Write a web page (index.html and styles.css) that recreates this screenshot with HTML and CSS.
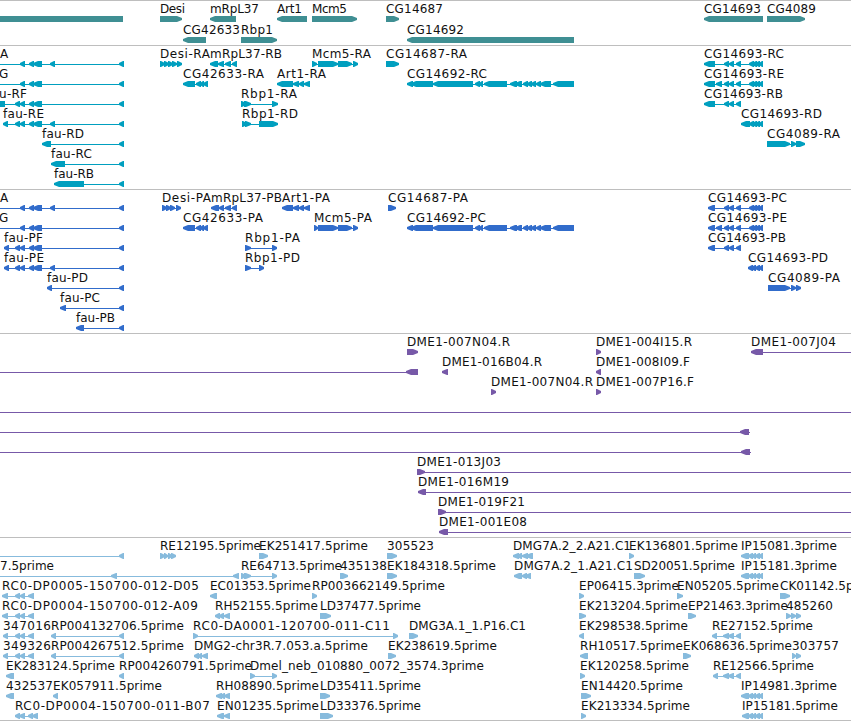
FILE: index.html
```html
<!DOCTYPE html>
<html lang="en">
<head>
  <meta charset="UTF-8">
  <title>Genome tracks</title>
  <link rel="stylesheet" href="styles.css">
</head>
<body>

<main id="browser" class="browser"></main>

<script src="tracks.js"></script>

</body>
</html>
```

FILE: styles.css
```css
body {
  margin: 0;
  background-color: #fff;
  font-family: "DejaVu Sans", sans-serif;
  font-size: 12px;
  overflow: hidden;
}

.browser {
  display: flex;
  flex-direction: column;
  border-bottom: 1px solid #bebebe;
}

.track {
  border-top: 1px solid #bebebe;
  padding-bottom: 3px;
}

.row {
  display: block;
  width: 100%;
  height: 20px;
  overflow: visible;
}

.label {
  fill: #111;
}

.genes {
  color: #3f8f93;
  padding-bottom: 2px;
}

.genes .row {
  height: 21px;
}

.transcripts {
  color: #009fbf;
}

.proteins {
  color: #316ccb;
}

.clones {
  color: #7759a8;
}

.ests {
  color: #87bbdd;
  padding-bottom: 2px;
}

.exon, .intron {
  fill: currentColor;
}
```

FILE: tracks.js
```js
// feature: [label, label start, label end, strand, exons, line start, line end]
const fau = "29-34 33-42";
const utr = "724-729 729-734 736-741";
const tail = "749-754 752-757 755-760 759-763";
const cg14692 = "407-413 411-433 433-473 475-480 479-483 484-507 510-517 515-522 523-528 527-532 531-536 536-541 540-551 553-574";
const rc0 = "2-8 15-20 20-25 28-34";
const ip = "741-749 748-753 752-756 755-760 759-763";

const tracks = [
  { name: "genes", rows: [
    [
      ["", 0, 0, "<", "-20-123"],
      ["Desi", 160, 185, ">", "160-182"],
      ["mRpL37", 210, 259, "<", "210-236"],
      ["Art1", 277, 302, "<", "277-307"],
      ["Mcm5", 312, 347, ">", "312-357"],
      ["CG14687", 386, 443, ">", "386-399"],
      ["CG14693", 704, 761, "<", "704-763"],
      ["CG4089", 767, 816, ">", "767-805"]
    ],
    [
      ["CG42633", 183, 240, "<", "183-206"],
      ["Rbp1", 241, 273, ">", "241-277"],
      ["CG14692", 407, 464, "<", "407-574"]
    ]
  ]},
  { name: "transcripts", rows: [
    [
      ["A", 0, 8, "<", `20-25 ${fau} 50-55 119-124`, -5],
      ["Desi-RA", 160, 210, ">", "160-165 164-169 168-173 172-177 177-182"],
      ["mRpL37-RB", 210, 282, "<", "210-218 218-224 225-231 232-237"],
      ["Mcm5-RA", 312, 371, ">", "312-317 318-338 338-352 353-358"],
      ["CG14687-RA", 386, 467, ">", "386-399"],
      ["CG14693-RC", 704, 784, "<", `704-715 ${utr} ${tail}`]
    ],
    [
      ["G", -1, 8, "<", `20-25 ${fau} 119-124`, -5],
      ["CG42633-RA", 183, 264, "<", "183-195 196-201 200-204 203-208"],
      ["Art1-RA", 277, 326, "<", "277-293 293-299 299-304 304-310"],
      ["CG14692-RC", 407, 487, "<", cg14692],
      ["CG14693-RE", 704, 784, "<", `704-715 716-722 ${utr} ${tail}`]
    ],
    [
      ["u-RF", -1, 27, "<", `-10-5 15-20 20-25 ${fau} 119-124`],
      ["Rbp1-RA", 241, 297, ">", "241-246 244-251 272-278"],
      ["CG14693-RB", 704, 783, "<", `704-715 ${utr}`]
    ],
    [
      ["fau-RE", 3, 44, "<", `3-8 15-20 20-25 ${fau} 50-55 119-124`],
      ["Rbp1-RD", 242, 298, ">", "242-247 245-251 259-278"],
      ["CG14693-RD", 741, 822, "<", `741-750 ${tail}`]
    ],
    [
      ["fau-RD", 42, 84, "<", "42-51 119-124"],
      ["CG4089-RA", 767, 840, ">", "767-772 768-790 791-796 796-805"]
    ],
    [
      ["fau-RC", 51, 92, "<", "51-65 119-124"]
    ],
    [
      ["fau-RB", 54, 94, "<", "54-84 119-124"]
    ]
  ]},
  { name: "proteins", rows: [
    [
      ["A", 0, 8, "<", `20-25 ${fau} 50-55 119-124`, -5],
      ["Desi-PA", 162, 211, ">", "162-167 166-171 170-175 176-181"],
      ["mRpL37-PB", 211, 282, "<", "211-219 219-224 225-231 232-237"],
      ["Art1-PA", 282, 330, "<", "282-293 293-299 299-304 304-310"],
      ["CG14687-PA", 388, 468, ">", "388-396"],
      ["CG14693-PC", 708, 787, "<", `708-715 ${utr} ${tail}`]
    ],
    [
      ["G", -1, 8, "<", `20-25 ${fau} 119-124`, -5],
      ["CG42633-PA", 183, 263, "<", "183-195 196-201 200-204 203-208"],
      ["Mcm5-PA", 314, 372, ">", "314-318 318-338 338-352 353-358"],
      ["CG14692-PC", 407, 486, "<", cg14692],
      ["CG14693-PE", 708, 787, "<", `708-715 716-722 ${utr} ${tail}`]
    ],
    [
      ["fau-PF", 4, 43, "<", `4-9 15-20 20-25 ${fau} 119-124`],
      ["Rbp1-PA", 245, 300, ">", "245-251 272-277"],
      ["CG14693-PB", 708, 786, "<", `708-715 ${utr}`]
    ],
    [
      ["fau-PE", 4, 44, "<", `4-9 15-20 20-25 ${fau} 50-55 119-124`],
      ["Rbp1-PD", 245, 300, ">", "245-251 259-264"],
      ["CG14693-PD", 748, 828, "<", "748-753 751-756 755-760 759-763"]
    ],
    [
      ["fau-PD", 47, 88, "<", "47-52 119-124"],
      ["CG4089-PA", 768, 840, ">", "768-790 791-796 796-801"]
    ],
    [
      ["fau-PC", 60, 100, "<", "60-66 119-124"]
    ],
    [
      ["fau-PB", 76, 115, "<", "76-84 119-124"]
    ]
  ]},
  { name: "clones", rows: [
    [
      ["DME1-007N04.R", 407, 510, ">", "407-418"],
      ["DME1-004I15.R", 596, 692, ">", "596-601"],
      ["DME1-007J04", 751, 836, "<", "751-763", 751, 860]
    ],
    [
      ["", 0, 0, "<", "406-418", -5],
      ["DME1-016B04.R", 442, 542, "<", "442-448"],
      ["DME1-008I09.F", 596, 690, "<", "596-601"]
    ],
    [
      ["DME1-007N04.R", 491, 593, ">", "491-496"],
      ["DME1-007P16.F", 596, 694, ">", "596-601"]
    ],
    [
      ["", 0, 0, "<", "", -5, 860]
    ],
    [
      ["", 0, 0, "<", "740-749", -5, 750]
    ],
    [
      ["", 0, 0, "<", "741-750", -5, 751]
    ],
    [
      ["DME1-013J03", 417, 501, ">", "417-425", 417, 860]
    ],
    [
      ["DME1-016M19", 418, 509, "<", "418-426", 418, 860]
    ],
    [
      ["DME1-019F21", 438, 525, ">", "438-446", 438, 860]
    ],
    [
      ["DME1-001E08", 439, 527, "<", "439-448", 439, 860]
    ]
  ]},
  { name: "ests", rows: [
    [
      ["", 0, 0, "<", "119-124", -5],
      ["RE12195.5prime", 160, 261, ">", "160-165 164-168 168-172 171-176"],
      ["EK251417.5prime", 259, 368, ">", "259-268"],
      ["305523", 387, 434, ">", "387-397"],
      ["DMG7A.2_2.A21.C1", 513, 631, "<", "513-519 517-522 522-528 526-533"],
      ["EK136801.5prime", 629, 738, ">", "629-634"],
      ["IP15081.3prime", 741, 837, "<", ip]
    ],
    [
      ["7.5prime", 0, 54, "<", "111-117 233-239", -5],
      ["RE64713.5prime", 241, 342, ">", "241-246 244-251 272-277"],
      ["435138", 340, 387, ">", "340-348"],
      ["EK184318.5prime", 387, 496, ">", "387-397"],
      ["DMG7A.2_1.A21.C1", 514, 633, "<", "514-522 522-527 525-531"],
      ["SD20051.5prime", 634, 735, ">", "634-645"],
      ["IP15181.3prime", 741, 837, "<", ip]
    ],
    [
      ["RC0-DP0005-150700-012-D05", 2, 199, "<", rc0],
      ["EC01353.5prime", 210, 311, "<", "210-217"],
      ["RP003662149.5prime", 312, 445, ">", "312-317"],
      ["EP06415.3prime", 579, 679, ">", "579-584"],
      ["EN05205.5prime", 677, 779, ">", "677-683"],
      ["CK01142.5prime", 780, 881, ">", "780-790"]
    ],
    [
      ["RC0-DP0004-150700-012-A09", 2, 198, "<", rc0],
      ["RH52155.5prime", 215, 318, "<", "215-220 219-224 224-230"],
      ["LD37477.5prime", 320, 421, ">", "320-331"],
      ["EK213204.5prime", 579, 688, ">", "579-586"],
      ["EP21463.3prime", 688, 788, ">", "688-696"],
      ["485260", 786, 833, ">", "786-791 791-796 796-801"]
    ],
    [
      ["347016", 3, 51, "<", "3-8 15-20 20-25 28-34"],
      ["RP004132706.5prime", 51, 184, "<", "51-56 119-124"],
      ["RC0-DA0001-120700-011-C11", 193, 390, ">", "193-198 393-398"],
      ["DMG3A.1_1.P16.C1", 409, 526, ">", "409-418"],
      ["EK298538.5prime", 579, 688, "<", "579-584"],
      ["RE27152.5prime", 712, 813, "<", "712-717 723-729 728-734 736-741"]
    ],
    [
      ["349326", 3, 51, "<", "3-8 15-20 20-25 28-34"],
      ["RP004267512.5prime", 51, 184, "<", "51-56 119-124"],
      ["DMG2-chr3R.7.053.a.5prime", 194, 368, "<", "194-199 198-202 202-208"],
      ["EK238619.5prime", 388, 497, ">", "388-396"],
      ["RH10517.5prime", 580, 683, "<", "580-588"],
      ["EK068636.5prime", 683, 792, ">", "683-691"],
      ["303757", 792, 839, ">", "792-796 796-801"]
    ],
    [
      ["EK283124.5prime", 6, 115, "<", "6-14"],
      ["RP004260791.5prime", 119, 252, "<", "119-124"],
      ["Dmel_neb_010880_0072_3574.3prime", 250, 484, ">", "250-255 272-277"],
      ["EK120258.5prime", 580, 689, ">", "580-585"],
      ["RE12566.5prime", 713, 814, "<", "713-718 723-729 728-734 736-741"]
    ],
    [
      ["432537", 6, 53, "<", "6-14"],
      ["EK057911.5prime", 53, 162, "<", "53-58"],
      ["RH08890.5prime", 216, 319, "<", "216-222 220-225 224-230"],
      ["LD35411.5prime", 320, 421, ">", "320-330"],
      ["EN14420.5prime", 581, 683, ">", "581-591"],
      ["IP14981.3prime", 741, 837, "<", ip]
    ],
    [
      ["RC0-DP0004-150700-011-B07", 15, 210, "<", "15-20 19-25 28-33 32-38"],
      ["EN01235.5prime", 217, 319, "<", "217-224 224-230"],
      ["LD33376.5prime", 320, 421, ">", "320-333"],
      ["EK213334.5prime", 581, 690, ">", "581-586"],
      ["IP15181.5prime", 742, 838, "<", "742-749 748-753 752-756 755-760 759-763"]
    ]
  ]}
];

// box with a slightly blunt arrow head on the strand side
function exonPoints(start, end, strand) {
  const head = Math.min(5, end - start - 1);
  if (strand === "<") {
    return `${start},17 ${start + head},15 ${end},15 ${end},21 ${start + head},21 ${start},19`;
  }
  return `${end},17 ${end - head},15 ${start},15 ${start},21 ${end - head},21 ${end},19`;
}

function drawFeature([label, x, labelEnd, strand, exonList, from, to]) {
  const exons = (exonList.match(/-?\d+-\d+/g) || []).map(e => {
    const m = e.match(/^(-?\d+)-(\d+)$/);
    return [+m[1], +m[2]];
  });
  const start = from ?? exons[0][0];
  const end = to ?? exons[exons.length - 1][1];

  let svg = `<rect class="intron" x="${start}" y="18" width="${end - start}" height="1"/>`;
  exons.forEach(([a, b]) => {
    svg += `<polygon class="exon" points="${exonPoints(a, b, strand)}"/>`;
  });
  if (label) {
    svg += `<text class="label" x="${x}" y="12" textLength="${labelEnd - x}">${label}</text>`;
  }
  return svg;
}

document.getElementById("browser").innerHTML = tracks.map(track => `
  <section class="track ${track.name}">
    ${track.rows.map(row => `<svg class="row">${row.map(drawFeature).join("")}</svg>`).join("")}
  </section>
`).join("");
```
